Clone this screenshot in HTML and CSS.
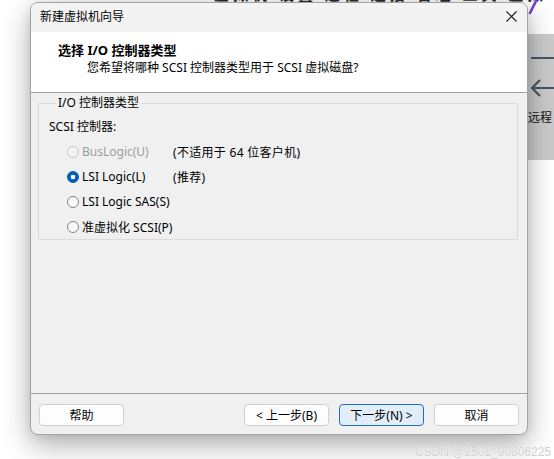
FILE: index.html
```html
<!DOCTYPE html>
<html>
<head>
  <title>新建虚拟机向导</title>
  <link rel="stylesheet" href="styles.css">
</head>
<body>
  <div class="desktop">
    <!-- window behind the wizard -->
    <div class="back-title">虚拟机 设置 远程 连接 管理 工具 虚拟 网络 编辑器 主页 库</div>
    <svg class="pen-stroke" width="16" height="16" viewBox="0 0 16 16">
      <line x1="10" y1="-1" x2="3" y2="13" stroke="#7b3fc6" stroke-width="2.6" stroke-linecap="round"/>
    </svg>
    <div class="side-panel">
      <span class="side-bar"></span>
      <svg class="side-arrow" width="26" height="18" viewBox="0 0 26 18">
        <path d="M3 9H26M11 1L3 9L11 17" fill="none" stroke="#4a5663" stroke-width="2.2"/>
      </svg>
      <span class="side-label">远程</span>
    </div>

    <div class="dialog">
      <div class="titlebar">
        <span class="titlebar-text">新建虚拟机向导</span>
        <svg class="close" width="11" height="11" viewBox="0 0 11 11">
          <path d="M0.5 0.5L10.5 10.5M10.5 0.5L0.5 10.5" stroke="#1a1a1a" stroke-width="1.1"/>
        </svg>
      </div>

      <div class="wizard-header">
        <div class="wizard-title">选择 I/O 控制器类型</div>
        <div class="wizard-subtitle">您希望将哪种 SCSI 控制器类型用于 SCSI 虚拟磁盘?</div>
      </div>

      <div class="wizard-body">
        <fieldset class="group">
          <legend>I/O 控制器类型</legend>
          <div class="row">SCSI 控制器:</div>
          <div class="options">
            <div class="option disabled">
              <span class="choice"><span class="radio"></span>BusLogic(U)</span>
              <span class="note">(不适用于 64 位客户机)</span>
            </div>
            <div class="option">
              <span class="choice"><span class="radio checked"></span>LSI Logic(L)</span>
              <span class="note">(推荐)</span>
            </div>
            <div class="option">
              <span class="choice"><span class="radio"></span>LSI Logic SAS(S)</span>
            </div>
            <div class="option">
              <span class="choice"><span class="radio"></span>准虚拟化 SCSI(P)</span>
            </div>
          </div>
        </fieldset>
      </div>

      <div class="wizard-footer">
        <button class="btn help">帮助</button>
        <button class="btn">&lt; 上一步(B)</button>
        <button class="btn primary">下一步(N) &gt;</button>
        <button class="btn">取消</button>
      </div>
    </div>

    <div class="watermark">CSDN @2501_90806225</div>
  </div>
</body>
</html>
```

FILE: styles.css
```css
html, body {
  margin: 0;
  padding: 0;
}

body {
  background: #ffffff;
  font-family: "Noto Sans", "Noto Sans CJK SC", sans-serif;
  font-size: 12px;
  color: #000;
}

.desktop {
  position: relative;
  width: 554px;
  height: 459px;
  overflow: hidden;
  background: #ffffff;
}

/* things that belong to the app behind the dialog */
.back-title {
  position: absolute;
  top: -17px;
  left: 214px;
  font-size: 15px;
  font-weight: bold;
  color: #2b2b2b;
  white-space: nowrap;
  letter-spacing: 4px;
}

.pen-stroke {
  position: absolute;
  top: 0;
  left: 527px;
}

.side-panel {
  position: absolute;
  top: 34px;
  left: 528px;
  width: 40px;
  height: 126px;
  background: #cacaca;
  display: flex;
  flex-direction: column;
  align-items: flex-start;
}

.side-bar {
  margin-top: 23px;
  margin-left: 3px;
  width: 30px;
  height: 2px;
  background: #4a5663;
}

.side-arrow {
  margin-top: 20px;
  margin-left: 1px;
}

.side-label {
  margin-top: 12px;
  font-family: "Noto Sans CJK SC", sans-serif;
  font-size: 12px;
  line-height: 16px;
  color: #111;
}

/* the wizard window */
.dialog {
  position: relative;
  z-index: 1;
  box-sizing: border-box;
  width: 498px;
  height: 433px;
  margin: 2px 0 0 30px;
  border: 1px solid #a3a3a3;
  border-radius: 8px;
  overflow: hidden;
  background: #f0f0f0;
  box-shadow: 0 10px 28px rgba(0, 0, 0, 0.32), 0 0 10px rgba(0, 0, 0, 0.08);
  display: flex;
  flex-direction: column;
}

.titlebar {
  height: 29px;
  box-sizing: border-box;
  padding: 0 10px 3px 9px;
  background: #f3f3f3;
  display: flex;
  align-items: center;
  justify-content: space-between;
}

.titlebar-text {
  font-family: "Noto Sans CJK SC", sans-serif;
  line-height: 16px;
}

.wizard-header {
  height: 61px;
  box-sizing: border-box;
  padding: 9px 0 0 27px;
  background: #ffffff;
  border-bottom: 1px solid #a0a0a0;
}

.wizard-title {
  font-size: 13px;
  font-weight: bold;
  line-height: 18px;
}

.wizard-subtitle {
  padding-left: 29px;
  line-height: 18px;
}

.wizard-body {
  flex: 1;
  padding: 2px 9px 0 7px;
}

.group {
  margin: 0;
  padding: 3px 0 0 10px;
  border: 1px solid #dcdcdc;
  min-inline-size: 0;
}

.group legend {
  margin-left: 7px;
  padding: 0 2px;
  line-height: 16px;
}

.row {
  height: 25px;
  line-height: 25px;
}

.options {
  margin-left: 18px;
}

.option {
  display: grid;
  grid-template-columns: 106px auto;
  align-items: center;
  height: 25px;
}

.choice {
  display: flex;
  align-items: center;
  gap: 3px;
  white-space: nowrap;
}

.note {
  letter-spacing: 0.3px;
}

.radio {
  flex: none;
  box-sizing: border-box;
  width: 12px;
  height: 12px;
  border-radius: 50%;
  border: 1px solid #858585;
  background: #f8f8f8;
}

.radio.checked {
  border-color: #005fb8;
  background: radial-gradient(circle, #ffffff 0 2px, #005fb8 2.6px);
}

.option.disabled .choice {
  color: #9d9d9d;
}

.option.disabled .radio {
  border-color: #c8c8c8;
  background: #f3f3f3;
}

.wizard-footer {
  height: 41px;
  box-sizing: border-box;
  border-top: 1px solid #a0a0a0;
  padding: 10px 8px 0 8px;
  display: flex;
  align-items: flex-start;
  gap: 10px;
}

.btn {
  width: 85px;
  height: 22px;
  padding: 0;
  box-sizing: border-box;
  border: 1px solid #d0d0d0;
  border-radius: 4px;
  background: #fdfdfd;
  font-family: "Noto Sans", "Noto Sans CJK SC", sans-serif;
  font-size: 12px;
  color: #000;
}

.btn.help {
  margin-right: auto;
}

.btn.primary {
  background: #e1eef9;
  border-color: #1f6fc0;
}

.watermark {
  position: absolute;
  z-index: 2;
  right: 3px;
  bottom: 0;
  font-family: "Liberation Sans", sans-serif;
  font-size: 12px;
  line-height: 14px;
  color: #cfcfcf;
  text-shadow: 0 0 1px #ffffff, 0 0 1px #ffffff;
}
```
